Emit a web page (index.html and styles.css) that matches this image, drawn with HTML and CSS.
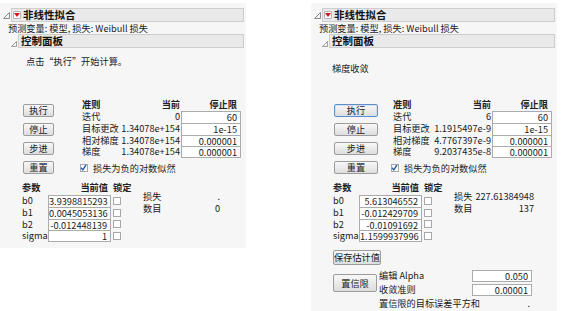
FILE: index.html
```html
<!DOCTYPE html>
<html lang="zh-CN">
<head>
    <meta charset="UTF-8">
    <title>非线性拟合</title>
    <link rel="stylesheet" href="styles.css">
</head>
<body>

<div class="report">

    <!-- 运行前 -->
    <div class="panel">
        <div class="outline">
            <svg class="disclose" width="7" height="7" viewBox="0 0 7 7"><path d="M6.5 0.5V6.5H0.5Z"/></svg>
            <div class="bar"><span class="menu"><svg width="6" height="4" viewBox="0 0 6 4"><path d="M0 0H6L3 4Z"/></svg></span>非线性拟合</div>
        </div>
        <div class="subtitle">预测变量: 模型, 损失: Weibull 损失</div>
        <div class="outline inner">
            <svg class="disclose" width="6" height="6" viewBox="0 0 7 7"><path d="M6.5 0.5V6.5H0.5Z"/></svg>
            <div class="bar">控制面板</div>
        </div>
        <div class="msg">点击“执行”开始计算。</div>
        <div class="ctrl">
            <div class="btns">
                <button>执行</button>
                <button>停止</button>
                <button>步进</button>
                <button>重置</button>
            </div>
            <div class="crit">
                <div class="crit-grid">
                    <b>准则</b><b class="r">当前</b><b class="r lim">停止限</b>
                    <span>迭代</span><span class="r">0</span><span class="box">60</span>
                    <span>目标更改</span><span class="r">1.34078e+154</span><span class="box">1e-15</span>
                    <span>相对梯度</span><span class="r">1.34078e+154</span><span class="box">0.000001</span>
                    <span>梯度</span><span class="r">1.34078e+154</span><span class="box last">0.000001</span>
                </div>
                <div class="check"><span class="cb on"><svg width="7" height="7" viewBox="0 0 7 7"><path d="M1 3.8L2.8 5.8L6 1"/></svg></span>损失为负的对数似然</div>
            </div>
        </div>
        <div class="params">
            <div class="param-grid">
                <b>参数</b><b class="r">当前值</b><b class="lock">锁定</b>
                <span>b0</span><span class="box">3.9398815293</span><span class="cb"></span>
                <span>b1</span><span class="box">0.0045053136</span><span class="cb"></span>
                <span>b2</span><span class="box">-0.012448139</span><span class="cb"></span>
                <span>sigma</span><span class="box last">1</span><span class="cb"></span>
            </div>
            <div class="loss">
                <span>损失</span><span class="r">.</span>
                <span>数目</span><span class="r">0</span>
            </div>
        </div>
    </div>

    <!-- 收敛后 -->
    <div class="panel done">
        <div class="outline">
            <svg class="disclose" width="7" height="7" viewBox="0 0 7 7"><path d="M6.5 0.5V6.5H0.5Z"/></svg>
            <div class="bar"><span class="menu"><svg width="6" height="4" viewBox="0 0 6 4"><path d="M0 0H6L3 4Z"/></svg></span>非线性拟合</div>
        </div>
        <div class="subtitle">预测变量: 模型, 损失: Weibull 损失</div>
        <div class="outline inner">
            <svg class="disclose" width="6" height="6" viewBox="0 0 7 7"><path d="M6.5 0.5V6.5H0.5Z"/></svg>
            <div class="bar">控制面板</div>
        </div>
        <div class="msg">梯度收敛</div>
        <div class="ctrl">
            <div class="btns">
                <button class="focus">执行</button>
                <button>停止</button>
                <button>步进</button>
                <button>重置</button>
            </div>
            <div class="crit">
                <div class="crit-grid">
                    <b>准则</b><b class="r">当前</b><b class="r lim">停止限</b>
                    <span>迭代</span><span class="r">6</span><span class="box">60</span>
                    <span>目标更改</span><span class="r">1.1915497e-9</span><span class="box">1e-15</span>
                    <span>相对梯度</span><span class="r">4.7767397e-9</span><span class="box">0.000001</span>
                    <span>梯度</span><span class="r">9.2037435e-8</span><span class="box last">0.000001</span>
                </div>
                <div class="check"><span class="cb on"><svg width="7" height="7" viewBox="0 0 7 7"><path d="M1 3.8L2.8 5.8L6 1"/></svg></span>损失为负的对数似然</div>
            </div>
        </div>
        <div class="params">
            <div class="param-grid">
                <b>参数</b><b class="r">当前值</b><b class="lock">锁定</b>
                <span>b0</span><span class="box">5.613046552</span><span class="cb"></span>
                <span>b1</span><span class="box">-0.012429709</span><span class="cb"></span>
                <span>b2</span><span class="box">-0.01091692</span><span class="cb"></span>
                <span>sigma</span><span class="box last">1.1599937996</span><span class="cb"></span>
            </div>
            <div class="loss">
                <span>损失</span><span class="r">227.61384948</span>
                <span>数目</span><span class="r">137</span>
            </div>
        </div>
        <button class="save">保存估计值</button>
        <div class="conf">
            <button class="conf-btn">置信限</button>
            <div class="conf-grid">
                <span>编辑 Alpha</span><span class="box last">0.050</span>
                <span>收敛准则</span><span class="box last">0.00001</span>
                <span>置信限的目标误差平方和</span><span class="r dot">.</span>
            </div>
        </div>
    </div>

</div>

</body>
</html>
```

FILE: styles.css
```css
body {
    margin: 0;
    background: #fff;
    font-family: "Noto Sans CJK SC", sans-serif;
    font-size: 9.2px;
    color: #1a1a1a;
}
b {
    font-weight: bold;
    color: #222;
}
.r {
    text-align: right;
}
.report {
    display: flex;
    align-items: flex-start;
    gap: 65px;
}
.panel {
    width: 246px;
    margin-top: 3px;
    padding-bottom: 6px;
    background: #f6f6f6;
}

/* 标题栏 */
.outline {
    display: flex;
    align-items: center;
    height: 14px;
    margin-top: 5px;
}
.disclose {
    margin-left: 3px;
    fill: none;
    stroke: #8a8a8a;
    stroke-width: 1;
}
.bar {
    flex: 1;
    display: flex;
    align-items: center;
    height: 14px;
    box-sizing: border-box;
    margin-left: 1px;
    margin-right: 2px;
    padding-left: 1px;
    background: #e9e9e9;
    border: 1px solid #cdcdcd;
    font-size: 10.5px;
    font-weight: bold;
    line-height: 12px;
    color: #111;
}
.menu {
    display: flex;
    align-items: center;
    justify-content: center;
    width: 8px;
    height: 8px;
    box-sizing: border-box;
    margin-right: 2px;
    background: #fff;
    border: 1px solid #b5b5b5;
    border-radius: 1px;
}
.menu svg {
    fill: #d8141b;
}
.subtitle {
    height: 11px;
    margin-top: 1px;
    padding-left: 8px;
    line-height: 11px;
    white-space: nowrap;
}
.outline.inner {
    margin-top: 0;
}
.outline.inner .disclose {
    margin-left: 11px;
    margin-top: 5px;
}
.outline.inner .bar {
    padding-left: 2px;
}

.msg {
    height: 51px;
    box-sizing: border-box;
    padding: 8px 0 0 26px;
    line-height: 11px;
}
.done .msg {
    padding: 15px 0 0 21px;
}

/* 按钮和准则 */
.ctrl {
    display: flex;
}
.btns {
    display: flex;
    flex-direction: column;
    gap: 6px;
    width: 31px;
    margin: 5px 0 0 23px;
}
.done .btns {
    width: 44px;
}
button {
    height: 13px;
    padding: 0;
    font-family: inherit;
    font-size: 9.2px;
    line-height: 11px;
    color: #1a1a1a;
    white-space: nowrap;
    background: linear-gradient(#f8f8f8, #dddddd);
    border: 1px solid #9c9c9c;
    border-radius: 2px;
}
button.focus {
    border-color: #5d8fc6;
    box-shadow: inset 0 0 0 1px #cfe1f3;
}
.crit {
    width: 159px;
    margin-left: 28px;
}
.done .crit {
    margin-left: 15px;
}
.crit-grid {
    display: grid;
    grid-template-columns: auto 1fr 60px;
    grid-template-rows: 12px repeat(4, 11.75px);
    line-height: 11px;
    white-space: nowrap;
}
.crit-grid .r {
    padding-right: 1px;
}
.crit-grid .lim {
    padding-right: 4px;
}
.box {
    display: block;
    height: 100%;
    box-sizing: border-box;
    padding-right: 3px;
    text-align: right;
    line-height: 10px;
    background: #fff;
    border: 1px solid #ababab;
    border-bottom: none;
    white-space: nowrap;
}
.box.last {
    border-bottom: 1px solid #ababab;
}
.check {
    display: flex;
    align-items: center;
    height: 12px;
    margin: 4px 0 0 -2px;
    line-height: 11px;
}
.cb {
    display: block;
    width: 8px;
    height: 8px;
    box-sizing: border-box;
    background: #fff;
    border: 1px solid #a8a8a8;
}
.check .cb {
    margin-right: 5px;
}
.cb svg {
    display: block;
    margin: -1px 0 0 -1px;
    fill: none;
    stroke: #2a5fb0;
    stroke-width: 1.4;
}

/* 参数 */
.params {
    display: flex;
    align-items: flex-start;
    margin: 8px 0 0 22px;
}
.param-grid {
    display: grid;
    grid-template-columns: 26px 63px 21px;
    grid-template-rows: 13px repeat(4, 11.75px);
    align-items: center;
    line-height: 11px;
    white-space: nowrap;
}
.param-grid > span:not(.cb),
.param-grid > b {
    align-self: stretch;
}
.param-grid .r {
    padding-right: 3px;
}
.param-grid .lock {
    padding-left: 2px;
}
.param-grid .cb {
    margin-left: 2px;
}
.loss {
    display: grid;
    grid-template-columns: max-content 1fr;
    grid-auto-rows: 11.5px;
    column-gap: 3px;
    width: 77px;
    margin: 9px 0 0 11px;
    line-height: 11px;
    white-space: nowrap;
}

/* 保存和置信限 */
.save {
    display: block;
    width: 48px;
    height: 15px;
    margin: 8px 0 0 22px;
}
.conf {
    display: flex;
    align-items: flex-start;
    margin-top: 5px;
}
.conf-btn {
    width: 44px;
    height: 18px;
    margin: 4px 0 0 22px;
}
.conf-grid {
    display: grid;
    grid-template-columns: 93px 60px;
    grid-template-rows: 12px 12px 12px;
    row-gap: 2px;
    margin-left: 2px;
    line-height: 11px;
    white-space: nowrap;
}
.conf-grid .dot {
    padding-right: 2px;
}
```
